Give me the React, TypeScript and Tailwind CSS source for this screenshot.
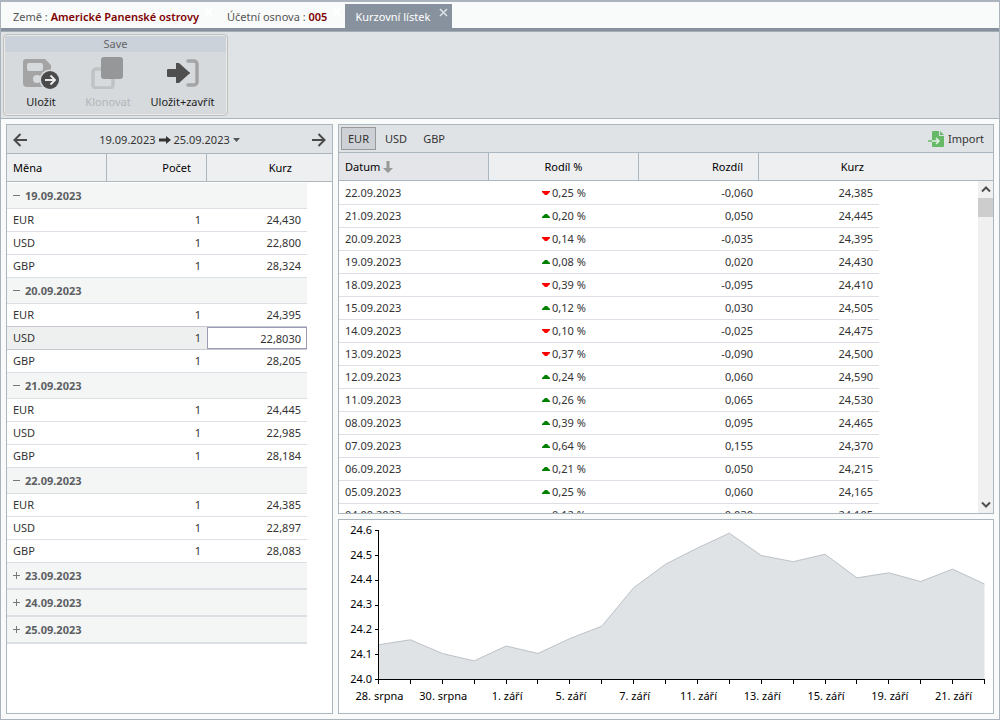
import { useState } from 'react';
import { clsx } from 'clsx';

interface CurrencyRow {
  code: string;
  amount: string;
  rate: string;
}

interface DayGroup {
  date: string;
  rows: CurrencyRow[];
}

interface HistoryRow {
  date: string;
  percent: string;
  diff: string;
  rate: string;
}

function day(date: string, eur: string, usd: string, gbp: string): DayGroup {
  return {
    date,
    rows: [
      { code: 'EUR', amount: '1', rate: eur },
      { code: 'USD', amount: '1', rate: usd },
      { code: 'GBP', amount: '1', rate: gbp },
    ],
  };
}

const days: DayGroup[] = [
  day('19.09.2023', '24,430', '22,800', '28,324'),
  day('20.09.2023', '24,395', '22,8030', '28,205'),
  day('21.09.2023', '24,445', '22,985', '28,184'),
  day('22.09.2023', '24,385', '22,897', '28,083'),
  { date: '23.09.2023', rows: [] },
  { date: '24.09.2023', rows: [] },
  { date: '25.09.2023', rows: [] },
];

const history: HistoryRow[] = [
  { date: '22.09.2023', percent: '0,25 %', diff: '-0,060', rate: '24,385' },
  { date: '21.09.2023', percent: '0,20 %', diff: '0,050', rate: '24,445' },
  { date: '20.09.2023', percent: '0,14 %', diff: '-0,035', rate: '24,395' },
  { date: '19.09.2023', percent: '0,08 %', diff: '0,020', rate: '24,430' },
  { date: '18.09.2023', percent: '0,39 %', diff: '-0,095', rate: '24,410' },
  { date: '15.09.2023', percent: '0,12 %', diff: '0,030', rate: '24,505' },
  { date: '14.09.2023', percent: '0,10 %', diff: '-0,025', rate: '24,475' },
  { date: '13.09.2023', percent: '0,37 %', diff: '-0,090', rate: '24,500' },
  { date: '12.09.2023', percent: '0,24 %', diff: '0,060', rate: '24,590' },
  { date: '11.09.2023', percent: '0,26 %', diff: '0,065', rate: '24,530' },
  { date: '08.09.2023', percent: '0,39 %', diff: '0,095', rate: '24,465' },
  { date: '07.09.2023', percent: '0,64 %', diff: '0,155', rate: '24,370' },
  { date: '06.09.2023', percent: '0,21 %', diff: '0,050', rate: '24,215' },
  { date: '05.09.2023', percent: '0,25 %', diff: '0,060', rate: '24,165' },
  { date: '04.09.2023', percent: '0,12 %', diff: '-0,030', rate: '24,105' },
];

const chartValues = [
  24.14, 24.16, 24.105, 24.075, 24.135, 24.105, 24.165, 24.215, 24.37, 24.465, 24.53, 24.59, 24.5,
  24.475, 24.505, 24.41, 24.43, 24.395, 24.445, 24.385,
];

// one label for every second point
const chartLabels = [
  '28. srpna',
  '30. srpna',
  '1. září',
  '5. září',
  '7. září',
  '11. září',
  '13. září',
  '15. září',
  '19. září',
  '21. září',
];

function CloseIcon({ className }: { className: string }) {
  return (
    <svg className={className} width="9" height="9" viewBox="0 0 9 9" fill="none" stroke="currentColor">
      <path d="M1 1l7 7M8 1l-7 7" strokeWidth="1.5" />
    </svg>
  );
}

interface TabProps {
  label: string;
  value?: string;
  active?: boolean;
}

function Tab({ label, value, active = false }: TabProps) {
  return (
    <div className={clsx('relative flex', active ? 'bg-[#87929e] text-white' : 'text-[#555]')}>
      <button
        type="button"
        className={clsx('pt-[2px] pl-[10px] whitespace-nowrap', active ? 'pr-[22px]' : 'pr-[18px]')}
      >
        {label}
        {value && <span className="font-semibold text-[#7d0000]"> {value}</span>}
      </button>
      <button type="button" aria-label="Zavřít" className="absolute top-1 right-1">
        <CloseIcon className={active ? 'text-[#dde1e5]' : 'text-white'} />
      </button>
    </div>
  );
}

function SaveIcon() {
  return (
    <svg width="38" height="32" viewBox="0 0 38 32">
      <path
        fillRule="evenodd"
        fill="#a4a4a5"
        d="M4 2h19l6 6v18a4 4 0 0 1-4 4H5a4 4 0 0 1-4-4V5a3 3 0 0 1 3-3zM7 6a2 2 0 0 0-2 2v4a2 2 0 0 0 2 2h12a2 2 0 0 0 2-2V8a2 2 0 0 0-2-2zM15 18a4 4 0 0 0 0 8a4 4 0 0 0 0-8z"
      />
      <circle cx="28" cy="23" r="10.5" fill="#d6dadd" />
      <circle cx="28" cy="23" r="9" fill="#4a4a4a" />
      <path d="M23 23h9M28.500 18.500l4.500 4.500l-4.500 4.500" fill="none" stroke="#e8e8e8" strokeWidth="2" />
    </svg>
  );
}

function CloneIcon() {
  return (
    <svg width="34" height="32" viewBox="0 0 34 32">
      <rect x="2" y="12" width="20" height="19" rx="3" fill="none" stroke="#c0c3c4" strokeWidth="3.500" />
      <rect x="10" y="0" width="22" height="22" rx="3" fill="#969798" />
    </svg>
  );
}

function SaveCloseIcon() {
  return (
    <svg width="34" height="32" viewBox="0 0 34 32">
      <path d="M2 12h8V6h3l10 9a1 1 0 0 1 0 2L13 26h-3v-6H2a1 1 0 0 1-1-1v-6a1 1 0 0 1 1-1z" fill="#4f4f4f" />
      <path
        d="M22 4h6a3 3 0 0 1 3 3v18a3 3 0 0 1-3 3h-6"
        fill="none"
        stroke="#a4a4a5"
        strokeWidth="3.500"
        strokeLinecap="round"
      />
    </svg>
  );
}

function Ribbon() {
  return (
    <div className="border-t border-b border-t-[#a3acb5] border-b-[#abb4bc] bg-[#dfe3e6] px-[2px] py-[2px] flex shrink-0">
      <div className="border border-[#bfbfbd] rounded-sm p-px bg-[#eaebe9]">
        <div className="h-4 bg-[#cbd2da] text-center leading-4 text-[#666]">Save</div>
        <div className="flex h-[62px] bg-[#d6dadd] text-[#222]">
          <button type="button" className="w-[72px] flex flex-col items-center pt-[5px] gap-[5px]">
            <SaveIcon />
            <span>Uložit</span>
          </button>
          <button
            type="button"
            disabled
            className="w-[62px] flex flex-col items-center pt-[5px] gap-[5px] text-[#b3b6b9]"
          >
            <CloneIcon />
            <span>Klonovat</span>
          </button>
          <button type="button" className="w-[87px] flex flex-col items-center pt-[5px] gap-[5px]">
            <SaveCloseIcon />
            <span>Uložit+zavřít</span>
          </button>
        </div>
      </div>
    </div>
  );
}

function SmallArrow({ className }: { className?: string }) {
  return (
    <svg className={className} width="15" height="14" viewBox="0 0 15 14" fill="none" stroke="#4a4a4a">
      <path d="M14 7H2M7.500 1L1.500 7l6 6" strokeWidth="2" />
    </svg>
  );
}

function DateRangeBar() {
  return (
    <div className="h-[29px] shrink-0 bg-[#dfe3e6] border-b border-[#abb6bf] flex items-center justify-between px-[6px] pt-[2px]">
      <button type="button" aria-label="Předchozí">
        <SmallArrow />
      </button>
      <button type="button" className="flex items-center gap-[3px] text-[#333]">
        <span>19.09.2023</span>
        <svg width="12" height="8" viewBox="0 0 12 8" fill="#333">
          <path d="M0 2.500h7V0l5 4l-5 4V5.500H0z" />
        </svg>
        <span>25.09.2023</span>
        <svg width="7" height="4" viewBox="0 0 7 4" fill="#555">
          <path d="M0 0h7L3.500 4z" />
        </svg>
      </button>
      <button type="button" aria-label="Další">
        <SmallArrow className="rotate-180" />
      </button>
    </div>
  );
}

const headCell = 'h-7 p-0 font-normal border-b border-[#abb6bf] bg-[#eeeff1] text-black';

function RateTable() {
  const [closed, setClosed] = useState<string[]>(['23.09.2023', '24.09.2023', '25.09.2023']);

  const toggle = (date: string) => {
    setClosed((prev) => {
      return prev.includes(date) ? prev.filter((d) => d !== date) : [...prev, date];
    });
  };

  return (
    <table className="w-full table-fixed border-separate border-spacing-0">
      <colgroup>
        <col className="w-[100px]" />
        <col className="w-[100px]" />
        <col className="w-[100px]" />
        <col />
      </colgroup>
      <thead>
        <tr>
          <th className={clsx(headCell, 'border-r text-left pl-[6px]')}>Měna</th>
          <th className={clsx(headCell, 'border-r text-right pr-[15px]')}>Počet</th>
          <th className={clsx(headCell, 'text-right pr-[15px]')}>Kurz</th>
          <td className={headCell} />
        </tr>
      </thead>
      {days.map((group) => {
        const isClosed = closed.includes(group.date);
        return (
          <tbody key={group.date} className="first-of-type:before:block first-of-type:before:h-px">
            <tr>
              <td
                colSpan={3}
                className={clsx('p-0 bg-[#f4f6f6] border-[#dcdfe3]', isClosed ? 'h-[27px] border-b-2' : 'h-[26px] border-b')}
              >
                <button
                  type="button"
                  aria-expanded={!isClosed}
                  onClick={() => {
                    toggle(group.date);
                  }}
                  className="flex w-full items-center gap-[5px] pl-[6px] font-bold text-[#5c5f62]"
                >
                  <svg width="7" height="7" viewBox="0 0 7 7" stroke="#777">
                    <path d={isClosed ? 'M0 3.500h7M3.500 0v7' : 'M0 3.500h7'} />
                  </svg>
                  {group.date}
                </button>
              </td>
            </tr>
            {!isClosed &&
              group.rows.map((row) => {
                const isEditing = group.date === '20.09.2023' && row.code === 'USD';
                const isBeforeEditing = group.date === '20.09.2023' && row.code === 'EUR';
                const cell = clsx(
                  'h-[23px] p-0 border-b',
                  isEditing || isBeforeEditing ? 'border-[#c6cad0]' : 'border-[#dcdfe6]',
                  isEditing && 'bg-[#eef0ef]',
                );
                return (
                  <tr key={row.code}>
                    <td className={clsx(cell, 'pl-[6px]')}>{row.code}</td>
                    <td className={clsx(cell, 'text-right pr-[6px]')}>{row.amount}</td>
                    {isEditing ? (
                      <td className={cell}>
                        <input
                          type="text"
                          aria-label="Kurz USD"
                          defaultValue={row.rate}
                          className="block w-full h-[22px] bg-white border border-[#9b9bb3] text-right pr-[5px] outline-none"
                        />
                      </td>
                    ) : (
                      <td className={clsx(cell, 'text-right pr-[6px]')}>{row.rate}</td>
                    )}
                  </tr>
                );
              })}
          </tbody>
        );
      })}
    </table>
  );
}

function CurrencyBar() {
  const [currency, setCurrency] = useState('EUR');

  return (
    <div className="h-7 shrink-0 bg-[#dfe3e6] border-b border-[#abb6bf] flex items-center px-[2px] gap-[2px] text-[#333]">
      {['EUR', 'USD', 'GBP'].map((code) => {
        return (
          <button
            key={code}
            type="button"
            aria-pressed={currency === code}
            onClick={() => {
              setCurrency(code);
            }}
            className={clsx(
              'h-[23px] px-[6px] pt-px border',
              currency === code ? 'bg-[#cdd1d5] border-[#98999b]' : 'border-transparent',
            )}
          >
            {code}
          </button>
        );
      })}
      <button type="button" className="ml-auto mr-[7px] pt-px flex items-center gap-1">
        <svg width="16" height="16" viewBox="0 0 16 16">
          <path d="M5 0h6v5h5v10a1 1 0 0 1-1 1H5a1 1 0 0 1-1-1V1a1 1 0 0 1 1-1z" fill="#66b966" />
          <path d="M12 0l4 4h-4z" fill="#66b966" />
          <path d="M0 10h4" stroke="#66b966" strokeWidth="1.500" />
          <path d="M4 10h7M8 7l3 3l-3 3" fill="none" stroke="#e4efe6" strokeWidth="1.500" />
        </svg>
        Import
      </button>
    </div>
  );
}

function Trend({ down }: { down: boolean }) {
  return (
    <svg className="inline-block mr-[2px] mb-[2px]" width="8" height="4" viewBox="0 0 8 4">
      <path d={down ? 'M0 0h8v1L5 4H3L0 1z' : 'M0 4h8V3L5 0H3L0 3z'} fill={down ? '#f00' : '#008000'} />
    </svg>
  );
}

function HistoryTable() {
  const cell = 'h-[23px] p-0 border-b border-[#dcdfe6]';

  return (
    <div className="relative flex-1 min-h-0 overflow-hidden">
      <table className="w-full table-fixed border-separate border-spacing-0">
        <colgroup>
          <col className="w-[150px]" />
          <col className="w-[150px]" />
          <col className="w-[120px]" />
          <col className="w-[120px]" />
          <col />
        </colgroup>
        <thead>
          <tr>
            <th className="h-7 p-0 font-normal border-b border-r border-[#abb6bf] bg-[#e4e5e9] text-black text-left pl-[6px]">
              Datum
              <svg className="inline-block ml-[3px] mb-px" width="10" height="12" viewBox="0 0 10 12" fill="#999">
                <path d="M3.500 0h3v7H10l-5 5l-5-5h3.500z" />
              </svg>
            </th>
            <th className={clsx(headCell, 'border-r text-center')}>Rodíl %</th>
            <th className={clsx(headCell, 'border-r text-right pr-[15px]')}>Rozdíl</th>
            <th className={clsx(headCell, 'text-right pr-[15px]')}>Kurz</th>
            <td className={headCell} />
          </tr>
        </thead>
        <tbody className="before:block before:h-px">
          {history.map((row) => {
            return (
              <tr key={row.date}>
                <td className={clsx(cell, 'pl-[6px]')}>{row.date}</td>
                <td className={clsx(cell, 'text-center')}>
                  <Trend down={row.diff.startsWith('-')} />
                  {row.percent}
                </td>
                <td className={clsx(cell, 'text-right pr-[6px]')}>{row.diff}</td>
                <td className={clsx(cell, 'text-right pr-[6px]')}>{row.rate}</td>
              </tr>
            );
          })}
        </tbody>
      </table>

      <div className="absolute top-7 right-0 bottom-0 w-[15px] bg-[#f0f0f0] flex flex-col items-center">
        <svg width="15" height="17" viewBox="0 0 15 17" fill="none" stroke="#505050">
          <path d="M4 10.500l4-4l4 4" strokeWidth="2" />
        </svg>
        <div className="w-full h-[19px] bg-[#cdcdcd]" />
        <svg className="mt-auto" width="15" height="17" viewBox="0 0 15 17" fill="none" stroke="#505050">
          <path d="M4 6.500l4 4l4-4" strokeWidth="2" />
        </svg>
      </div>
    </div>
  );
}

function RateChart() {
  const left = 39.5;
  const right = 645.5;
  const bottom = 159.5;
  const step = (right - left) / (chartValues.length - 1);
  const toY = (value: number) => {
    return bottom - (value - 24) * 248;
  };
  const line = chartValues
    .map((value, i) => {
      return `${left + i * step},${toY(value)}`;
    })
    .join(' ');

  return (
    <svg className="block w-full" viewBox="0 0 654 193" fontSize="11" role="img" aria-label="Vývoj kurzu">
      <polygon points={`${left},${bottom} ${line} ${right},${bottom}`} fill="#dfe3e6" />
      <polyline points={line} fill="none" stroke="#bcc1c8" />
      <g stroke="#000" fill="none" shapeRendering="crispEdges">
        <path d={`M${left - 4} ${toY(24.6)}H${left}V${bottom}H${right}V${bottom + 4}`} />
        {[24, 24.1, 24.2, 24.3, 24.4, 24.5].map((value) => {
          return <path key={value} d={`M${left - 4} ${toY(value)}H${left}`} />;
        })}
        {chartValues.map((value, i) => {
          return <path key={i} d={`M${left + i * step} ${bottom}v4`} />;
        })}
      </g>
      <g fill="#000">
        {['24.0', '24.1', '24.2', '24.3', '24.4', '24.5', '24.6'].map((label) => {
          return (
            <text key={label} x="33" y={toY(Number(label)) + 3} textAnchor="end">
              {label}
            </text>
          );
        })}
        {chartLabels.map((label, i) => {
          return (
            <text key={label} x={left + 1 + i * 2 * step} y="180" textAnchor="middle">
              {label}
            </text>
          );
        })}
      </g>
    </svg>
  );
}

export default function App() {
  return (
    <div className="h-screen flex flex-col border border-t-2 border-[#abb4bc] bg-[#f9fafa] font-['Noto_Sans','Open_Sans',sans-serif] text-[11px] leading-4 text-[#333]">
      <div className="flex h-[29px] shrink-0 pt-[2px] pl-[2px] border-b-3 border-[#87929e]">
        <Tab label="Země :" value="Americké Panenské ostrovy" />
        <Tab label="Účetní osnova :" value="005" />
        <Tab label="Kurzovní lístek" active />
      </div>
      <Ribbon />
      <main className="flex-1 min-h-0 flex gap-[5px] p-[5px]">
        <section className="w-[327px] shrink-0 flex flex-col border border-[#abb6bf] bg-white overflow-hidden">
          <DateRangeBar />
          <RateTable />
        </section>
        <div className="flex-1 min-w-0 flex flex-col gap-[5px]">
          <section className="flex-1 min-h-0 flex flex-col border border-[#abb6bf] bg-white">
            <CurrencyBar />
            <HistoryTable />
          </section>
          <section className="shrink-0 border border-[#abb6bf] bg-white">
            <RateChart />
          </section>
        </div>
      </main>
    </div>
  );
}
